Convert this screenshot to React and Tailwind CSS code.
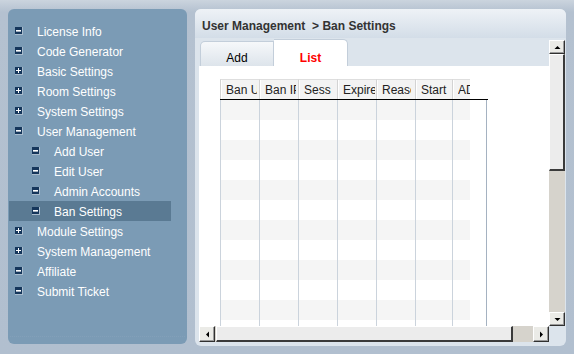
const menu = [
  { label: 'License Info', icon: 'minus' },
  { label: 'Code Generator', icon: 'minus' },
  { label: 'Basic Settings', icon: 'plus' },
  { label: 'Room Settings', icon: 'plus' },
  { label: 'System Settings', icon: 'plus' },
  { label: 'User Management', icon: 'minus' },
  { label: 'Add User', icon: 'minus', sub: true },
  { label: 'Edit User', icon: 'minus', sub: true },
  { label: 'Admin Accounts', icon: 'minus', sub: true },
  { label: 'Ban Settings', icon: 'minus', sub: true, active: true },
  { label: 'Module Settings', icon: 'plus' },
  { label: 'System Management', icon: 'plus' },
  { label: 'Affiliate', icon: 'minus' },
  { label: 'Submit Ticket', icon: 'minus' },
];

// header cells are clipped inside the grid like in the original control
const columns = [
  { title: 'Ban User', w: 'w-[39px]', clip: 'w-[31px]' },
  { title: 'Ban IP', w: 'w-[39px]', clip: 'w-[31px]' },
  { title: 'Session', w: 'w-[39px]', clip: 'w-[27px]' },
  { title: 'Expires', w: 'w-[39px]', clip: 'w-[32px]' },
  { title: 'Reason', w: 'w-[39px]', clip: 'w-[29px]' },
  { title: 'Start', w: 'w-[37px]', clip: 'w-[30px]' },
  { title: 'ADMIN', w: 'w-[18px]', clip: 'w-[12px]' },
];

function Toggle({ type }) {
  return (
    <svg width="8" height="8" viewBox="0 0 8 8" className="shrink-0">
      <rect x="0" y="0" width="8" height="8" fill="#a9bccd" />
      <rect x="0" y="0" width="7" height="7" fill="#15365b" />
      {type === 'minus' ? (
        <rect x="1" y="3" width="5" height="1.6" fill="#fff" />
      ) : (
        <>
          <rect x="1" y="3" width="5" height="1" fill="#fff" />
          <rect x="3" y="1" width="1" height="5" fill="#fff" />
        </>
      )}
    </svg>
  );
}

function Arrow({ dir }) {
  const pts = {
    up: '0.5,4 3.5,1 6.5,4',
    down: '0.5,1 3.5,4 6.5,1',
    left: '4,0.5 1,3.5 4,6.5',
    right: '1,0.5 4,3.5 1,6.5',
  }[dir];
  const size = dir === 'up' || dir === 'down' ? { width: 7, height: 5 } : { width: 5, height: 7 };
  return (
    <svg {...size} viewBox={`0 0 ${size.width} ${size.height}`}>
      <polygon points={pts} fill="#000" />
    </svg>
  );
}

function ScrollButton({ dir, className }) {
  return (
    <div
      className={`flex items-center justify-center bg-[#ebebe7] border-t border-l border-t-white border-l-white border-r border-b border-r-[#303030] border-b-[#303030] shadow-[inset_-1px_-1px_#9a9a9a] ${className}`}
    >
      <Arrow dir={dir} />
    </div>
  );
}

function App() {
  return (
    <div className="w-[574px] h-[354px] flex gap-2 pl-2 bg-[linear-gradient(to_bottom,#cbd4de_0px,#b4c1d0_12px,#b1bfcf_100%)] font-['Liberation_Sans',Arial,sans-serif] overflow-hidden">
      {/* sidebar */}
      <div className="mt-[9px] w-[179px] h-[335px] rounded-[6px] bg-[#7b9bb5] flex flex-col pt-3">
        {menu.map((item) => (
          <div
            key={item.label}
            className={`ml-px w-[162px] h-5 flex items-center gap-[14px] text-[12px] text-white ${
              item.sub ? 'pl-[23px]' : 'pl-[6px]'
            } ${item.active ? 'bg-[#5a7a93]' : ''}`}
          >
            <Toggle type={item.icon} />
            <span className="leading-none pt-px">{item.label}</span>
          </div>
        ))}
        <div className="flex-1" />
        <div className="mb-[7px] mx-[2px] border-t border-dotted border-[#83a0b9]" />
      </div>

      {/* main panel */}
      <div className="mt-[9px] w-[371px] h-[337px] rounded-[6px] bg-[#dce4ec] flex flex-col overflow-hidden">
        <div className="h-[29px] shrink-0 bg-[linear-gradient(to_bottom,#eef2f6,#d3dde8)] pl-[7px] pt-[5px] flex items-center text-[12px] font-bold text-[#333]">
          User Management&nbsp;&nbsp;&gt; Ban Settings
        </div>

        <div className="flex pl-[4px]">
          <div className="w-[350px] flex flex-col">
            {/* tabs */}
            <div className="h-[28px] flex items-end pl-px">
              <div className="w-[74px] h-[25px] rounded-tl-[5px] border border-b-0 border-[#c3ceda] bg-[linear-gradient(to_bottom,#f6f8fa,#dde4eb)] flex items-center justify-center pt-[7px] text-[12px] text-black">
                Add
              </div>
              <div className="w-[74px] h-[27px] rounded-tr-[5px] border border-b-0 border-l-0 border-[#c3ceda] bg-white flex items-center justify-center pt-[9px] text-[12px] font-bold text-[#ff0000]">
                List
              </div>
            </div>

            {/* grid */}
            <div className="h-[260px] bg-white overflow-hidden pl-[21px] pt-[13px]">
              <div className="w-[268px]">
                <div className="flex h-[21px] border-b border-black">
                  {columns.map((c) => (
                    <div
                      key={c.title}
                      className={`${c.w} h-full shrink-0 bg-[#f3f3f3] border-t border-t-[#dedede] border-l border-l-[#d3d3d3] shadow-[inset_1px_0_#ffffff] pl-[5px] flex items-center text-[12px] text-[#222]`}
                    >
                      <span className={`${c.clip} block overflow-hidden whitespace-nowrap`}>{c.title}</span>
                    </div>
                  ))}
                  <div className="flex-1 bg-white" />
                </div>
                <div className="flex">
                  <div className="w-[250px] shrink-0">
                    {Array.from({ length: 12 }).map((_, i) => (
                      <div key={i} className={`flex h-5 ${i % 2 === 0 ? 'bg-[#f5f5f5]' : 'bg-white'}`}>
                        {columns.map((c) => (
                          <div key={c.title} className={`${c.w} h-full shrink-0 border-l border-[#cbd3dc]`} />
                        ))}
                      </div>
                    ))}
                  </div>
                  <div className="w-[17px] border-r border-[#a5b2c1]" />
                </div>
              </div>
            </div>

            {/* horizontal scrollbar */}
            <div className="h-[16px] flex bg-[#d6d3cc]">
              <ScrollButton dir="left" className="w-[16px] h-[16px]" />
              <div className="ml-px w-[297px] h-[16px] bg-[#ececec] border-l border-t border-white border-r-2 border-b-2 border-r-[#3a3a3a] border-b-[#3a3a3a]" />
              <div className="flex-1" />
              <ScrollButton dir="right" className="w-[16px] h-[16px]" />
            </div>
          </div>

          {/* vertical scrollbar */}
          <div className="w-[16px] flex flex-col pt-[2px]">
            <div className="h-[286px] flex flex-col bg-[#d6d3cc]">
              <ScrollButton dir="up" className="w-[16px] h-[14px]" />
              <div className="h-[117px] bg-[#ececec] border-l border-t border-white border-r-2 border-b-2 border-r-[#3a3a3a] border-b-[#3a3a3a]" />
              <div className="flex-1" />
              <ScrollButton dir="down" className="w-[16px] h-[14px]" />
            </div>
          </div>
        </div>
      </div>
    </div>
  );
}

export default App;
